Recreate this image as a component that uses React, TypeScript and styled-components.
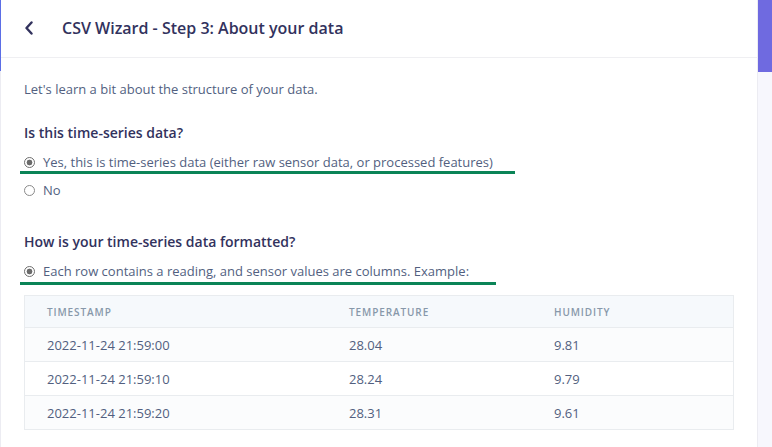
import React from "react";
import styled, { createGlobalStyle } from "styled-components";

const Global = createGlobalStyle`
  html, body { margin: 0; padding: 0; background: #ffffff; }
  body { font-family: "Open Sans", "Noto Sans", sans-serif; width: 772px; height: 447px; overflow: hidden; }
  * { box-sizing: border-box; }
`;

const Page = styled.div`
  display: flex;
  width: 772px;
  height: 447px;
  overflow: hidden;
`;

const LeftEdge = styled.div`
  width: 1px;
  flex: none;
  background: linear-gradient(to bottom, #5b6ee6 0, #5b6ee6 71px, #ececf2 71px, #ececf2 100%);
`;

const Main = styled.div`
  flex: 1;
  display: flex;
  flex-direction: column;
  background: #ffffff;
`;

const Scrollbar = styled.div`
  width: 15px;
  flex: none;
  background: #f7f7fd;
  border-left: 1px solid #ececf2;
  display: flex;
  flex-direction: column;
`;

const Thumb = styled.div`
  height: 72px;
  background: #6f6ae0;
`;

const Header = styled.div`
  height: 58px;
  flex: none;
  display: flex;
  align-items: center;
  padding: 0 0 1px 22px;
  border-bottom: 1px solid #efeff2;
`;

const BackButton = styled.button`
  border: 0;
  background: transparent;
  padding: 0;
  width: 12px;
  height: 14px;
  display: flex;
  align-items: center;
  justify-content: center;
  margin-right: 27px;
  cursor: pointer;
`;

const Title = styled.h1`
  margin: 0;
  font-size: 16px;
  font-weight: 600;
  color: #32325d;
  line-height: 20px;
`;

const Body = styled.div`
  padding: 21px 23px 0 23px;
  display: flex;
  flex-direction: column;
`;

const Intro = styled.p`
  margin: 0;
  font-size: 13px;
  line-height: 20px;
  color: #525f7f;
`;

const Question = styled.h2<{ $top: number }>`
  margin: ${(p) => p.$top}px 0 0 0;
  font-size: 14px;
  font-weight: 600;
  line-height: 20px;
  color: #32325d;
`;

const Option = styled.label<{ $top: number }>`
  display: flex;
  align-items: center;
  height: 20px;
  margin-top: ${(p) => p.$top}px;
  font-size: 13px;
  color: #525f7f;
  cursor: pointer;
`;

const Radio = styled.span<{ $checked?: boolean }>`
  width: 11px;
  height: 11px;
  border-radius: 50%;
  border: 1px solid ${(p) => (p.$checked ? "#6e6e6e" : "#8a8a8a")};
  background: ${(p) => (p.$checked ? "radial-gradient(circle, #6a6a6a 0, #6a6a6a 2.6px, #ffffff 3.2px)" : "#ffffff")};
  margin-right: 8px;
  flex: none;
`;

const Highlight = styled.div<{ $width: number; $top: number }>`
  width: ${(p) => p.$width}px;
  height: 3px;
  margin-left: -4px;
  margin-top: ${(p) => p.$top}px;
  background: #0b8457;
`;

const Table = styled.div`
  margin-top: 10px;
  width: 710px;
  border: 1px solid #e9ecef;
  display: flex;
  flex-direction: column;
`;

const Row = styled.div<{ $head?: boolean; $stripe?: boolean }>`
  display: grid;
  grid-template-columns: 302px 205px 1fr;
  align-items: center;
  height: ${(p) => (p.$head ? 31 : 34)}px;
  background: ${(p) => (p.$head ? "#f6f9fc" : p.$stripe ? "#fbfcfd" : "#ffffff")};
  border-top: ${(p) => (p.$head ? "0" : "1px solid #e9ecef")};
`;

const HeadCell = styled.div`
  padding-left: 22px;
  font-size: 10px;
  font-weight: 600;
  letter-spacing: 0.9px;
  text-transform: uppercase;
  color: #8898aa;
`;

const Cell = styled.div`
  padding-left: 22px;
  font-size: 13px;
  color: #525f7f;
`;

const rows = [
  ["2022-11-24 21:59:00", "28.04", "9.81"],
  ["2022-11-24 21:59:10", "28.24", "9.79"],
  ["2022-11-24 21:59:20", "28.31", "9.61"],
];

export default function App() {
  return (
    <>
      <Global />
      <Page>
        <LeftEdge />
        <Main>
          <Header>
            <BackButton aria-label="Back">
              <svg width="10" height="14" viewBox="0 0 10 14">
                <path d="M7.5 1.5 L2.5 7 L7.5 12.5" fill="none" stroke="#32325d" strokeWidth="2.4" strokeLinecap="round" strokeLinejoin="round" />
              </svg>
            </BackButton>
            <Title>CSV Wizard - Step 3: About your data</Title>
          </Header>
          <Body>
            <Intro>Let's learn a bit about the structure of your data.</Intro>
            <Question $top={24}>Is this time-series data?</Question>
            <Option $top={9}>
              <Radio $checked />
              Yes, this is time-series data (either raw sensor data, or processed features)
            </Option>
            <Highlight $width={495} $top={-1} />
            <Option $top={6}>
              <Radio />
              No
            </Option>
            <Question $top={32}>How is your time-series data formatted?</Question>
            <Option $top={9}>
              <Radio $checked />
              Each row contains a reading, and sensor values are columns. Example:
            </Option>
            <Highlight $width={476} $top={1} />
            <Table>
              <Row $head>
                <HeadCell>Timestamp</HeadCell>
                <HeadCell>Temperature</HeadCell>
                <HeadCell>Humidity</HeadCell>
              </Row>
              {rows.map((r, i) => (
                <Row key={i} $stripe={i % 2 === 0}>
                  {r.map((c, j) => (
                    <Cell key={j}>{c}</Cell>
                  ))}
                </Row>
              ))}
            </Table>
          </Body>
        </Main>
        <Scrollbar>
          <Thumb />
        </Scrollbar>
      </Page>
    </>
  );
}
